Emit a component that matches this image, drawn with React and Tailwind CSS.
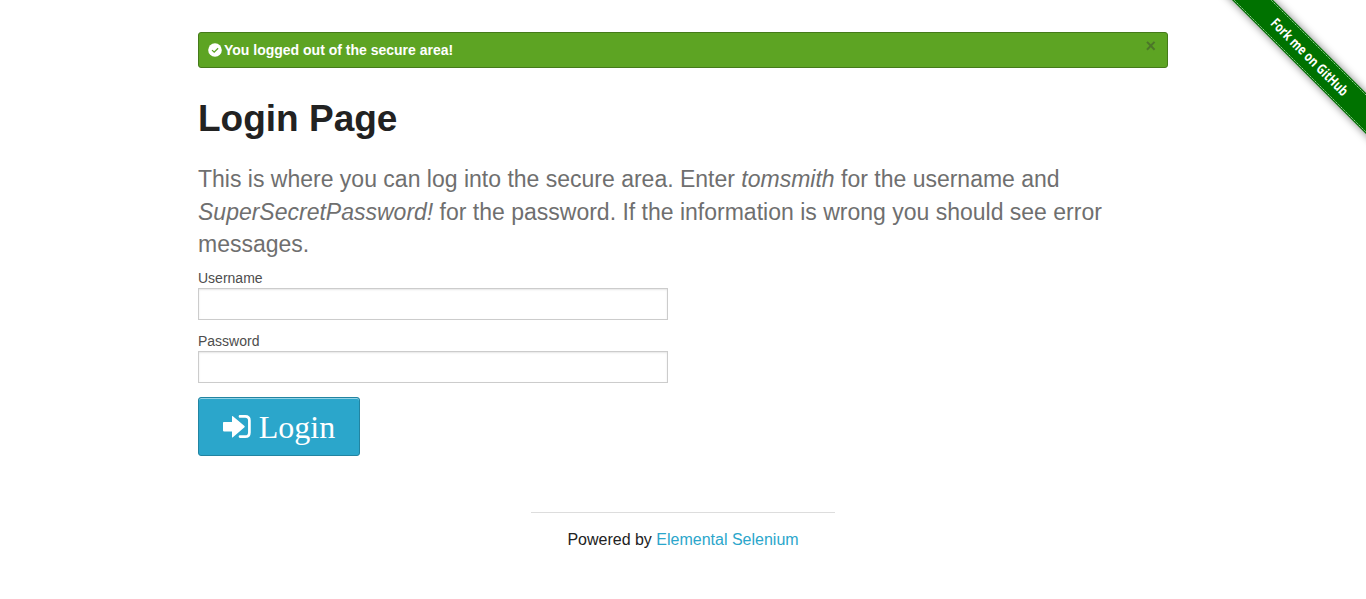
import React from "react";

function Field({ label, type, id }) {
  return (
    <div className="w-[470px]">
      <label htmlFor={id} className="block h-[20px] text-[14px] leading-[20px] text-[#4d4d4d]">{label}</label>
      <input
        id={id}
        type={type}
        className="block h-[32px] w-full border border-[#cccccc] bg-white p-2 text-[14px] shadow-[inset_0_1px_2px_rgba(0,0,0,0.1)] outline-none"
      />
    </div>
  );
}

function CheckIcon() {
  return (
    <svg className="size-[14px]" viewBox="0 0 14 14">
      <circle cx="7" cy="7" r="6.8" fill="#fff" />
      <path d="M4 7.1 6.200 9.200 10.100 5.200" fill="none" stroke="#5da423" strokeWidth="1.3" />
    </svg>
  );
}

function SignInIcon() {
  return (
    <svg className="h-[23px] w-[29px]" viewBox="0 0 29 23">
      <path
        d="M.8 7H9V1.600Q9 .6 9.900 1.200L21.500 11Q22 11.600 21.500 12.200L9.900 22.300Q9 22.900 9 21.900V16.400H.8Q0 16.400 0 15.600V7.800Q0 7 .8 7Z"
        fill="#fff"
      />
      <path d="M17 1.400H22.200Q26.400 1.400 26.400 5.600V17.400Q26.400 21.600 22.200 21.600H17" fill="none" stroke="#fff" strokeWidth="2.7" strokeLinecap="round" />
    </svg>
  );
}

function Ribbon() {
  return (
    <svg className="absolute top-0 right-0 h-[149px] w-[149px]" viewBox="0 0 149 149">
      <defs>
        <filter id="soft" x="-20%" y="-20%" width="140%" height="140%">
          <feGaussianBlur stdDeviation="4" />
        </filter>
      </defs>
      <path d="M0-15 190 175V134L41-15Z" fill="#000" opacity="0.5" filter="url(#soft)" />
      <path d="M0-15 190 175V134L41-15Z" fill="#007200" />
      <path d="M2-15 190 173M39-15 190 136" stroke="#fff" strokeOpacity="0.6" strokeWidth="1" strokeDasharray="1.5 0.8" fill="none" />
      <text
        transform="translate(93 56.500) rotate(45)"
        textAnchor="middle"
        dominantBaseline="central"
        fill="#fff"
        fontSize="14"
        fontWeight="700"
        fontFamily="'Open Sans', sans-serif"
        textLength="103"
        lengthAdjust="spacingAndGlyphs"
      >
        Fork me on GitHub
      </text>
    </svg>
  );
}

export default function App() {
  return (
    <div className="relative h-[599px] overflow-hidden bg-white font-['Liberation_Sans',Arial,sans-serif] text-[#222222]">
      <Ribbon />
      <div className="mx-auto w-[970px] pt-8">
        <div className="flex h-[36px] items-start justify-between rounded-[3px] border border-[#457a1a] bg-[#5da423] pl-[9px] pr-[11px] text-[14px] font-bold text-white">
          <div className="flex h-[34px] items-center gap-[2px]">
            <CheckIcon />
            <span>You logged out of the secure area!</span>
          </div>
          <a href="#" className="pt-[3px] text-[18px] leading-[20px] font-bold text-[#333333] opacity-40">×</a>
        </div>
        <h2 className="mt-[25px] h-[52px] text-[37px] leading-[52px] font-bold">Login Page</h2>
        <h4 className="mt-[18px] text-[23px] leading-[32.5px] text-[#6f6f6f]">
          This is where you can log into the secure area. Enter <em>tomsmith</em> for the username and <em>SuperSecretPassword!</em> for the password. If the information is wrong you should see error messages.
        </h4>
        <form className="mt-[7px] flex flex-col items-start">
          <div className="flex flex-col gap-[11px]">
            <Field label="Username" type="text" id="username" />
            <Field label="Password" type="password" id="password" />
          </div>
          <button type="button" className="mt-[14px] flex h-[59px] w-[162px] items-center justify-center gap-[7px] rounded-[3px] border border-[#2284a1] bg-[#2ba6cb] text-white shadow-[inset_0_1px_0_rgba(255,255,255,0.5)]">
            <SignInIcon />
            <span className="pt-[2px] font-['Liberation_Serif',serif] text-[32px] leading-[40px]">Login</span>
          </button>
        </form>
        <div className="mx-auto mt-[56px] w-[304px] border-t border-[#dddddd] pt-[15px] text-center text-[16px] leading-[24px]">
          Powered by <a href="#" className="text-[#2ba6cb]">Elemental Selenium</a>
        </div>
      </div>
    </div>
  );
}
